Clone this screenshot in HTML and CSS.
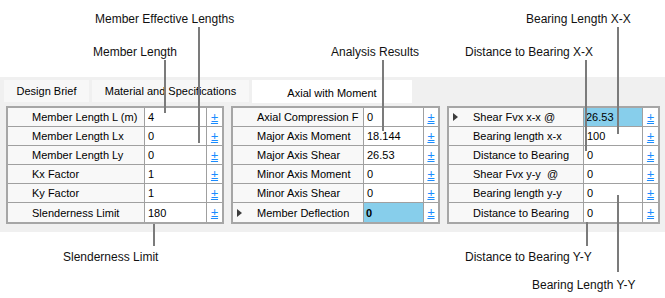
FILE: index.html
```html
<!DOCTYPE html>
<html lang="en">
<head>
    <meta charset="UTF-8">
    <title>Axial with Moment</title>
    <link rel="stylesheet" href="styles.css">
</head>
<body>
<div class="page">
    <div class="band">
        <div class="tabs">
            <div class="tab tab-brief">Design Brief</div>
            <div class="tab tab-mat">Material and Specifications</div>
            <div class="tab tab-axial active">Axial with Moment</div>
        </div>
        <div class="panels">
            <div class="grid g1">
                <div class="lbl"><span class="head"></span>Member Length L (m)</div><div class="val">4</div><div class="pm">±</div>
                <div class="lbl"><span class="head"></span>Member Length Lx</div><div class="val">0</div><div class="pm">±</div>
                <div class="lbl"><span class="head"></span>Member Length Ly</div><div class="val">0</div><div class="pm">±</div>
                <div class="lbl"><span class="head"></span>Kx Factor</div><div class="val">1</div><div class="pm">±</div>
                <div class="lbl"><span class="head"></span>Ky Factor</div><div class="val">1</div><div class="pm">±</div>
                <div class="lbl"><span class="head"></span>Slenderness Limit</div><div class="val">180</div><div class="pm">±</div>
            </div>
            <div class="grid g2">
                <div class="lbl"><span class="head"></span>Axial Compression F</div><div class="val">0</div><div class="pm">±</div>
                <div class="lbl"><span class="head"></span>Major Axis Moment</div><div class="val">18.144</div><div class="pm">±</div>
                <div class="lbl"><span class="head"></span>Major Axis Shear</div><div class="val">26.53</div><div class="pm">±</div>
                <div class="lbl"><span class="head"></span>Minor Axis Moment</div><div class="val">0</div><div class="pm">±</div>
                <div class="lbl"><span class="head"></span>Minor Axis Shear</div><div class="val">0</div><div class="pm">±</div>
                <div class="lbl"><span class="head cur"></span>Member Deflection</div><div class="val sel bold">0</div><div class="pm">±</div>
            </div>
            <div class="grid g3">
                <div class="lbl"><span class="head cur"></span>Shear Fvx x-x @</div><div class="val sel">26.53</div><div class="pm">±</div>
                <div class="lbl"><span class="head"></span>Bearing length x-x</div><div class="val">100</div><div class="pm">±</div>
                <div class="lbl"><span class="head"></span>Distance to Bearing</div><div class="val">0</div><div class="pm">±</div>
                <div class="lbl"><span class="head"></span>Shear Fvx y-y &nbsp;@</div><div class="val">0</div><div class="pm">±</div>
                <div class="lbl"><span class="head"></span>Bearing length y-y</div><div class="val">0</div><div class="pm">±</div>
                <div class="lbl"><span class="head"></span>Distance to Bearing</div><div class="val">0</div><div class="pm">±</div>
            </div>
        </div>
    </div>

    <!-- callouts -->
    <div class="note n-eff">Member Effective Lengths</div>
    <div class="note n-len">Member Length</div>
    <div class="note n-res">Analysis Results</div>
    <div class="note n-dx">Distance to Bearing X-X</div>
    <div class="note n-bx">Bearing Length X-X</div>
    <div class="note n-sl">Slenderness Limit</div>
    <div class="note n-dy">Distance to Bearing Y-Y</div>
    <div class="note n-by">Bearing Length Y-Y</div>

    <div class="lead l-eff"></div>
    <div class="lead l-len"></div>
    <div class="lead l-res"></div>
    <div class="lead l-dx"></div>
    <div class="lead l-bx"></div>
    <div class="lead l-sl"></div>
    <div class="lead l-dy"></div>
    <div class="lead l-by"></div>
</div>
</body>
</html>
```

FILE: styles.css
```css
body {
    margin: 0;
    padding: 0;
    background: #fff;
    color: #000;
    font-family: "Liberation Sans", Arial, sans-serif;
    font-size: 11px;
}
.page {
    position: relative;
    width: 665px;
    height: 298px;
    padding-top: 77px;
    box-sizing: border-box;
    overflow: hidden;
}
.band {
    height: 155px;
    background: #f0f0f0;
    padding-top: 3px;
    box-sizing: border-box;
}
.tabs {
    display: flex;
    gap: 3px;
    height: 22px;
    padding-left: 4px;
    align-items: flex-start;
}
.tab {
    height: 22px;
    line-height: 22px;
    text-align: center;
    background: #f7f7f7;
    color: #000;
}
.tab-brief { width: 85px; }
.tab-mat { width: 157px; }
.tab-axial { width: 160px; }
.tab.active {
    background: #fff;
    height: 23px;
    line-height: 26px;
}
.panels {
    display: flex;
    gap: 7px;
    margin-top: 4px;
    padding-left: 6px;
}
.grid {
    display: grid;
    grid-auto-rows: 19px;
    border: 2px solid #a6a6a6;
    background: #fff;
}
.g1 { grid-template-columns: 137px 62px 15px; }
.g2 { grid-template-columns: 131px 60px 14px; }
.g3 { grid-template-columns: 135px 59px 15px; }
.grid > div {
    box-sizing: border-box;
    border-bottom: 1px solid #a0a0a0;
    display: flex;
    align-items: center;
    white-space: nowrap;
    overflow: hidden;
}
.grid > div:nth-last-child(-n+3) {
    border-bottom: 0;
}
.lbl {
    background: #f8f8f8;
    border-right: 1px solid #a0a0a0;
}
.head {
    width: 24px;
    height: 100%;
    flex-shrink: 0;
    display: flex;
    align-items: center;
}
.head.cur::before {
    content: "";
    margin-left: 4px;
    border-left: 5px solid #3c3c3c;
    border-top: 4px solid transparent;
    border-bottom: 4px solid transparent;
}
.val {
    padding-left: 3px;
    border-right: 1px solid #a0a0a0;
}
.val.sel {
    background: #87ceeb;
    padding-left: 2px;
}
.val.bold {
    font-weight: bold;
}
.pm {
    justify-content: center;
    color: #1a8cff;
    font-size: 13px;
    text-decoration: underline;
}

/* callout labels and leader lines */
.note {
    position: absolute;
    font-size: 12px;
    line-height: 14px;
    white-space: nowrap;
    color: #111;
}
.n-eff { left: 95px; top: 12px; }
.n-len { left: 93px; top: 45px; }
.n-res { left: 331px; top: 45px; }
.n-dx { left: 465px; top: 45px; }
.n-bx { left: 526px; top: 12px; }
.n-sl { left: 63px; top: 250px; }
.n-dy { left: 465px; top: 250px; }
.n-by { left: 532px; top: 278px; }

.lead {
    position: absolute;
    width: 2px;
    background: #7b7b7b;
}
.l-eff { left: 198px; top: 27px; height: 116px; }
.l-len { left: 164px; top: 60px; height: 53px; }
.l-res { left: 382px; top: 60px; height: 71px; }
.l-dx { left: 585px; top: 60px; height: 91px; }
.l-bx { left: 617px; top: 27px; height: 107px; }
.l-sl { left: 153px; top: 224px; height: 22px; }
.l-dy { left: 586px; top: 222px; height: 24px; }
.l-by { left: 617px; top: 195px; height: 77px; }
```
